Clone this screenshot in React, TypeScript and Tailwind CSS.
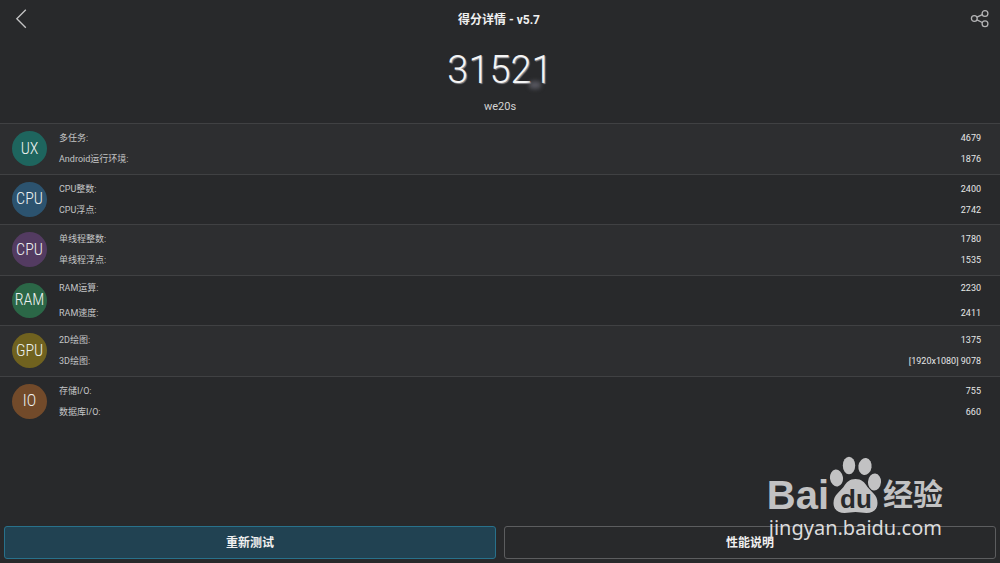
type Metric = { label: string; value: string };
type Group = { badge: string; color: string; loose?: boolean; metrics: Metric[] };

const groups: Group[] = [
  {
    badge: "UX",
    color: "bg-[#1e655e]",
    metrics: [
      { label: "多任务:", value: "4679" },
      { label: "Android运行环境:", value: "1876" },
    ],
  },
  {
    badge: "CPU",
    color: "bg-[#2c536f]",
    metrics: [
      { label: "CPU整数:", value: "2400" },
      { label: "CPU浮点:", value: "2742" },
    ],
  },
  {
    badge: "CPU",
    color: "bg-[#533b61]",
    metrics: [
      { label: "单线程整数:", value: "1780" },
      { label: "单线程浮点:", value: "1535" },
    ],
  },
  {
    badge: "RAM",
    color: "bg-[#2b6747]",
    loose: true,
    metrics: [
      { label: "RAM运算:", value: "2230" },
      { label: "RAM速度:", value: "2411" },
    ],
  },
  {
    badge: "GPU",
    color: "bg-[#70621f]",
    metrics: [
      { label: "2D绘图:", value: "1375" },
      { label: "3D绘图:", value: "[1920x1080] 9078" },
    ],
  },
  {
    badge: "IO",
    color: "bg-[#724a2a]",
    metrics: [
      { label: "存储I/O:", value: "755" },
      { label: "数据库I/O:", value: "660" },
    ],
  },
];

function Header() {
  return (
    <header className="flex h-[39px] items-center justify-between pl-3 pr-2">
      <button type="button" aria-label="返回" className="flex h-6 w-[18px] items-center justify-center">
        <svg width="18" height="24" viewBox="0 0 18 24" fill="none" stroke="#c4c4c5" strokeWidth="1.3">
          <path d="M13.8 1.8 4.8 10.8l9 9" />
        </svg>
      </button>
      <h1 className="text-xs font-bold text-[#f0f0f0]">得分详情 - v5.7</h1>
      <button type="button" aria-label="分享" className="flex h-6 w-6 items-center justify-center">
        <svg width="24" height="24" viewBox="0 0 24 24" fill="none" stroke="#b4b4b6" strokeWidth="1.3">
          <circle cx="6.3" cy="10.5" r="2.9" />
          <circle cx="17" cy="5.5" r="2.9" />
          <circle cx="17" cy="15.8" r="2.9" />
          <path d="m9 9.2 5.3-2.5M9 11.8l5.3 2.7" />
        </svg>
      </button>
    </header>
  );
}

function Score() {
  return (
    <section className="flex h-[84px] flex-col items-center pt-2">
      <div className="relative">
        <p className="text-[38px] font-light leading-[46px] text-[#f4f4f4] [text-shadow:1px_1px_1px_#8b8b8f]">31521</p>
        <span className="absolute bottom-1 right-3 h-2 w-3 rounded-full bg-[#55555d] blur-[2px]" />
      </div>
      <p className="pt-[6px] text-[11px] leading-4 text-[#d4d4d4]">we20s</p>
    </section>
  );
}

function GroupRow({ group }: { group: Group }) {
  return (
    <li className="flex items-center gap-3 border-t border-[#404143] pl-3 pr-[19px] odd:bg-[#2d2e30]">
      <span
        className={`flex h-[35px] w-[35px] shrink-0 items-center justify-center rounded-full font-['Roboto_Condensed','Liberation_Sans_Narrow',Roboto,sans-serif] text-base font-light text-[#eef2f2] ${group.color}`}
      >
        {group.badge}
      </span>
      <dl className={group.loose ? "grid flex-1 gap-[13px]" : "grid flex-1 gap-[9px]"}>
        {group.metrics.map((m) => (
          <div key={m.label} className="flex justify-between text-[9px] leading-3">
            <dt className="text-[#c4c5c6]">{m.label}</dt>
            <dd className="text-[#e6e7e7]">{m.value}</dd>
          </div>
        ))}
      </dl>
    </li>
  );
}

function Watermark() {
  return (
    <div className="pointer-events-none absolute bottom-[23px] right-[57px] flex flex-col items-start">
      <div className="flex items-end pb-[2px] text-[#c2c2c3]">
        <span className="font-['Liberation_Sans'] text-[40px] font-bold leading-[38px]">Bai</span>
        <svg width="52" height="60" viewBox="0 0 52 60" fill="#c2c2c3">
          <ellipse cx="7.5" cy="24" rx="6.5" ry="8.5" transform="rotate(-8 7.5 24)" />
          <ellipse cx="20" cy="11.5" rx="6.2" ry="8.7" />
          <ellipse cx="36" cy="12.5" rx="6.6" ry="8.5" transform="rotate(8 36 12.5)" />
          <ellipse cx="45.500" cy="28" rx="6.500" ry="8.500" transform="rotate(5 45.500 28)" />
          <path d="M26.500 25c6 0 9 3 12 8 4 5 10 8 10 16 0 7-5 10-11 10-4 0-7-1-11-1s-7 1-11 1C9.500 59 4.500 56 4.500 49c0-8 6-11 10-16 3-5 6-8 12-8Z" />
          <text x="11" y="54" fontFamily="Liberation Sans" fontSize="26" fontWeight="bold" fill="#28292b">
            du
          </text>
        </svg>
        <span className="pl-[2px] text-[30px] font-bold leading-[38px]">经验</span>
      </div>
      <span className="pl-[2px] font-['Noto_Sans'] text-xl leading-6 text-[#dcdcdd]">jingyan.baidu.com</span>
    </div>
  );
}

export default function App() {
  return (
    <main className="relative flex min-h-screen flex-col bg-[#28292b] font-[Roboto,'Noto_Sans_CJK_SC',sans-serif]">
      <Header />
      <Score />
      <ul className="grid h-[303px] auto-rows-fr">
        {groups.map((g, i) => (
          <GroupRow key={i} group={g} />
        ))}
      </ul>
      <footer className="mt-auto grid grid-cols-2 gap-2 px-1 pb-1">
        <button
          type="button"
          className="h-[33px] rounded-[3px] border border-[#28718b] bg-[#214252] text-xs font-bold text-[#f0f0f0]"
        >
          重新测试
        </button>
        <button
          type="button"
          className="h-[33px] rounded-[3px] border border-[#5c5d5f] text-xs font-bold text-[#f0f0f0]"
        >
          性能说明
        </button>
      </footer>
      <Watermark />
    </main>
  );
}
